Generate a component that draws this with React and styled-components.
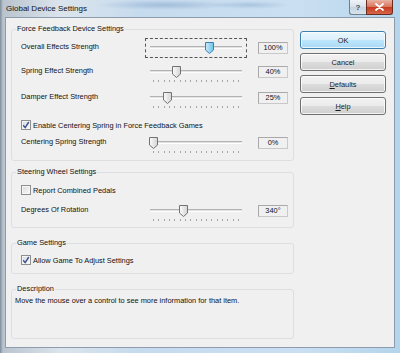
import React from "react";
import styled, { createGlobalStyle } from "styled-components";

const GlobalStyle = createGlobalStyle`
  html, body { margin: 0; padding: 0; background: #fff; }
  body { font-family: "Liberation Sans", Arial, sans-serif; color: #111; }
`;

const forceRows = [
  { label: "Overall Effects Strength", pos: 64, value: "100%", focused: true, top: 4 },
  { label: "Spring Effect Strength", pos: 31, value: "40%", ticks: true, top: 4 },
  { label: "Damper Effect Strength", pos: 22, value: "25%", ticks: true, top: 6 },
];

function App() {
  return (
    <>
      <GlobalStyle />
      <Window>
        <TitleBar>
          <Title>Global Device Settings</Title>
          <Controls>
            <HelpButton>?</HelpButton>
            <CloseButton>
              <svg width="9" height="8" viewBox="0 0 9 8">
                <path d="M1 1 L8 7 M8 1 L1 7" stroke="#fff" strokeWidth="1.8" strokeLinecap="round" />
              </svg>
            </CloseButton>
          </Controls>
        </TitleBar>

        <Client>
          <LeftColumn>
            <Group $top={11} $bottom={7}>
              <GroupTitle>Force Feedback Device Settings</GroupTitle>
              {forceRows.map((r) => (
                <SliderRow key={r.label} {...r} />
              ))}
              <CheckRow $top={11} checked label="Enable Centering Spring in Force Feedback Games" />
              <SliderRow label="Centering Spring Strength" pos={8} value="0%" ticks top={2} />
            </Group>

            <Group $top={11} $bottom={6}>
              <GroupTitle>Steering Wheel Settings</GroupTitle>
              <CheckRow $top={7} label="Report Combined Pedals" />
              <SliderRow label="Degrees Of Rotation" pos={38} value="340°" ticks top={5} />
            </Group>

            <Group $top={15} $bottom={7}>
              <GroupTitle>Game Settings</GroupTitle>
              <CheckRow $top={6} checked label="Allow Game To Adjust Settings" />
            </Group>

            <Group $top={15} $bottom={0} $grow>
              <GroupTitle>Description</GroupTitle>
              <DescText>Move the mouse over a control to see more information for that item.</DescText>
            </Group>
          </LeftColumn>

          <ButtonColumn>
            <Button $primary>OK</Button>
            <Button>Cancel</Button>
            <Button>
              <u>D</u>efaults
            </Button>
            <Button>
              <u>H</u>elp
            </Button>
          </ButtonColumn>
        </Client>
      </Window>
    </>
  );
}

function SliderRow({ label, pos, value, ticks, focused, top }) {
  const grad = focused ? "thumbBlue" : "thumbGray";
  return (
    <Row $top={top}>
      <RowLabel>{label}</RowLabel>
      <Slider $focused={focused}>
        <Track />
        {ticks && (
          <Ticks>
            {Array.from({ length: 17 }).map((_, i) => (
              <Tick key={i} />
            ))}
          </Ticks>
        )}
        <Thumb style={{ left: pos - 4.5 }}>
          <svg width="9" height="12" viewBox="0 0 9 12">
            <defs>
              <linearGradient id={grad} x1="0" x2="1" y1="0" y2="0">
                <stop offset="0" stopColor={focused ? "#c9ecfb" : "#fbfbfb"} />
                <stop offset="1" stopColor={focused ? "#6cc4ea" : "#d4d4d4"} />
              </linearGradient>
            </defs>
            <path
              d="M0.5 0.5 H8.5 V8 L4.5 11.5 L0.5 8 Z"
              fill={`url(#${grad})`}
              stroke={focused ? "#3c7fb1" : "#727272"}
            />
          </svg>
        </Thumb>
      </Slider>
      <ValueBox>{value}</ValueBox>
    </Row>
  );
}

function CheckRow({ label, checked, $top }) {
  return (
    <CheckLine $top={$top}>
      <CheckBox>
        {checked && (
          <svg width="8" height="8" viewBox="0 0 8 8">
            <path d="M1.2 4.2 L3.2 6.6 L6.8 1" fill="none" stroke="#3b4f8c" strokeWidth="1.4" />
          </svg>
        )}
      </CheckBox>
      <span>{label}</span>
    </CheckLine>
  );
}

export default App;

const Window = styled.div`
  width: 400px;
  height: 353px;
  display: flex;
  flex-direction: column;
  overflow: hidden;
  background:
    radial-gradient(ellipse 70px 5px at 165px 5px, rgba(80, 120, 170, 0.3), transparent),
    radial-gradient(ellipse 40px 4px at 250px 5px, rgba(80, 120, 170, 0.25), transparent),
    linear-gradient(to right, #7f8d9a 0, #b9c4cf 3px, #dbe4ec 60px, #c6dbee 140px, #cadff1 300px, #b4d5ec 100%);
`;

const TitleBar = styled.div`
  height: 17px;
  display: flex;
  justify-content: space-between;
  align-items: flex-start;
`;

const Title = styled.div`
  padding-left: 6px;
  font-size: 8px;
  line-height: 18px;
  color: #111;
`;

const Controls = styled.div`
  display: flex;
  margin-right: 7px;
`;

const HelpButton = styled.div`
  width: 17px;
  height: 15px;
  box-sizing: border-box;
  border: 1px solid #6f7f8f;
  border-top: none;
  border-right: none;
  border-bottom-left-radius: 3px;
  background: linear-gradient(#eef3f7, #d7e1ea 50%, #c5d2de 50%, #d8e3ec);
  display: flex;
  align-items: center;
  justify-content: center;
  font-size: 8px;
  font-weight: bold;
  color: #404a55;
`;

const CloseButton = styled.div`
  width: 27px;
  height: 15px;
  box-sizing: border-box;
  border: 1px solid #6b2a1e;
  border-top: none;
  border-bottom-right-radius: 3px;
  background: linear-gradient(#eab3a4, #d8735a 50%, #c6381d 50%, #d6664a);
  display: flex;
  align-items: center;
  justify-content: center;
`;

const Client = styled.div`
  flex: 1;
  display: flex;
  margin: 0 5px 5px;
  border: 1px solid #8c9cad;
  background: #f0f0f0;
`;

const LeftColumn = styled.div`
  width: 283px;
  margin-left: 5px;
  padding-bottom: 8px;
  display: flex;
  flex-direction: column;
`;

const Group = styled.div`
  margin-top: ${(p) => p.$top}px;
  padding: 0 0 ${(p) => p.$bottom}px 9px;
  border: 1px solid #dcdfe2;
  border-radius: 3px;
  flex: ${(p) => (p.$grow ? 1 : "none")};
  font-size: 7.4px;
`;

const GroupTitle = styled.div`
  width: fit-content;
  margin: -6px 0 0 -5px;
  padding: 0 1px;
  background: #f0f0f0;
  line-height: 10px;
  font-size: 7.4px;
`;

const Row = styled.div`
  display: grid;
  grid-template-columns: 113px 102px 30px;
  column-gap: 11px;
  height: 20px;
  margin-top: ${(p) => p.$top}px;
`;

const RowLabel = styled.div`
  line-height: 18px;
  font-size: 7.4px;
  white-space: nowrap;
`;

const Slider = styled.div`
  position: relative;
  height: 20px;
  outline: ${(p) => (p.$focused ? "1px dashed #555" : "none")};
  outline-offset: -1px;
`;

const Track = styled.div`
  position: absolute;
  left: 5px;
  right: 5px;
  top: 8px;
  height: 1px;
  border-top: 1px solid #b3b3b3;
  border-bottom: 1px solid #fdfdfd;
  background: #e2e2e2;
`;

const Ticks = styled.div`
  position: absolute;
  left: 8px;
  right: 8px;
  top: 18px;
  display: flex;
  justify-content: space-between;
`;

const Tick = styled.div`
  width: 1px;
  height: 2px;
  background: #a6a6a6;
`;

const Thumb = styled.div`
  position: absolute;
  top: 4px;
  width: 9px;
  height: 12px;
  line-height: 0;
`;

const ValueBox = styled.div`
  margin-top: 4px;
  height: 12px;
  box-sizing: border-box;
  border: 1px solid #c9c9c9;
  border-top-color: #a9a9a9;
  border-left-color: #a9a9a9;
  text-align: center;
  line-height: 10px;
  font-size: 7.4px;
`;

const CheckLine = styled.div`
  display: flex;
  align-items: center;
  gap: 2px;
  height: 12px;
  margin-top: ${(p) => p.$top}px;
  font-size: 7.4px;
`;

const CheckBox = styled.div`
  width: 10px;
  height: 10px;
  box-sizing: border-box;
  border: 1px solid #8f8f8f;
  background: linear-gradient(135deg, #d9d9d9, #fbfbfb);
  box-shadow: inset 0 0 0 1px #f5f5f5;
  display: flex;
  align-items: center;
  justify-content: center;
`;

const DescText = styled.div`
  margin: 2px 0 0 -6px;
  line-height: 10px;
  font-size: 7.4px;
  white-space: nowrap;
`;

const ButtonColumn = styled.div`
  width: 86px;
  margin-left: 6px;
  padding-top: 13px;
  display: flex;
  flex-direction: column;
  gap: 4px;
`;

const Button = styled.div`
  height: 18px;
  box-sizing: border-box;
  border: 1px solid ${(p) => (p.$primary ? "#3c7fb1" : "#707070")};
  border-radius: 3px;
  box-shadow: inset 0 0 0 1px rgba(255, 255, 255, 0.75);
  background: ${(p) =>
    p.$primary
      ? "linear-gradient(#eaf6fd, #d9f0fc 50%, #bee6fd 50%, #a7d9f5)"
      : "linear-gradient(#f2f2f2, #ebebeb 50%, #dddddd 50%, #cfcfcf)"};
  display: flex;
  align-items: center;
  justify-content: center;
  font-size: 7.4px;
  color: #1c1c1c;
`;
